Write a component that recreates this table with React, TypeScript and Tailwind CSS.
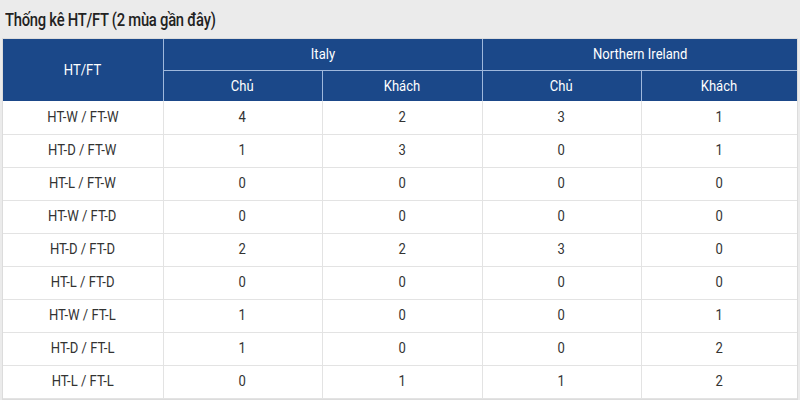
import React from "react";

const rows: [string, number, number, number, number][] = [
  ["HT-W / FT-W", 4, 2, 3, 1],
  ["HT-D / FT-W", 1, 3, 0, 1],
  ["HT-L / FT-W", 0, 0, 0, 0],
  ["HT-W / FT-D", 0, 0, 0, 0],
  ["HT-D / FT-D", 2, 2, 3, 0],
  ["HT-L / FT-D", 0, 0, 0, 0],
  ["HT-W / FT-L", 1, 0, 0, 1],
  ["HT-D / FT-L", 1, 0, 0, 2],
  ["HT-L / FT-L", 0, 1, 1, 2],
];

function C({ children }: { children: React.ReactNode }) {
  return <span className="inline-block scale-x-[0.87] origin-center whitespace-nowrap">{children}</span>;
}

export default function App() {
  return (
    <div className="w-[800px] h-[400px] overflow-hidden bg-[#ebebeb] font-['Roboto',sans-serif]">
      <div className="h-[38px] flex items-center pl-[5px] text-[18px] font-medium text-[#222]">
        <span className="inline-block scale-x-[0.82] origin-left whitespace-nowrap tracking-[-0.3px]">
          Thống kê HT/FT (2 mùa gần đây)
        </span>
      </div>
      <div className="mx-[2px] border border-[#dcdcdc] bg-white">
        <table className="w-[794px] border-collapse table-fixed text-[15px]">
          <colgroup>
            <col className="w-[160px]" />
            <col className="w-[159px]" />
            <col className="w-[160px]" />
            <col className="w-[159px]" />
            <col className="w-[156px]" />
          </colgroup>
          <thead className="bg-[#1b4889] text-white">
            <tr className="h-[31px]">
              <th rowSpan={2} className="font-normal border-r border-[#9fb8dc]"><C>HT/FT</C></th>
              <th colSpan={2} className="font-normal border-r border-b border-[#9fb8dc]"><C>Italy</C></th>
              <th colSpan={2} className="font-normal border-b border-[#9fb8dc]"><C>Northern Ireland</C></th>
            </tr>
            <tr className="h-[31px]">
              <th className="font-normal border-r border-[#9fb8dc]"><C>Chủ</C></th>
              <th className="font-normal border-r border-[#9fb8dc]"><C>Khách</C></th>
              <th className="font-normal border-r border-[#9fb8dc]"><C>Chủ</C></th>
              <th className="font-normal"><C>Khách</C></th>
            </tr>
          </thead>
          <tbody className="text-[#333]">
            {rows.map((r, i) => (
              <tr key={i} className="h-[33px] border-b border-[#e3e3e3]">
                <td className="text-center border-r border-[#e3e3e3]"><C>{r[0]}</C></td>
                <td className="text-center border-r border-[#e3e3e3]"><C>{r[1]}</C></td>
                <td className="text-center border-r border-[#e3e3e3]"><C>{r[2]}</C></td>
                <td className="text-center border-r border-[#e3e3e3]"><C>{r[3]}</C></td>
                <td className="text-center"><C>{r[4]}</C></td>
              </tr>
            ))}
          </tbody>
        </table>
      </div>
    </div>
  );
}
